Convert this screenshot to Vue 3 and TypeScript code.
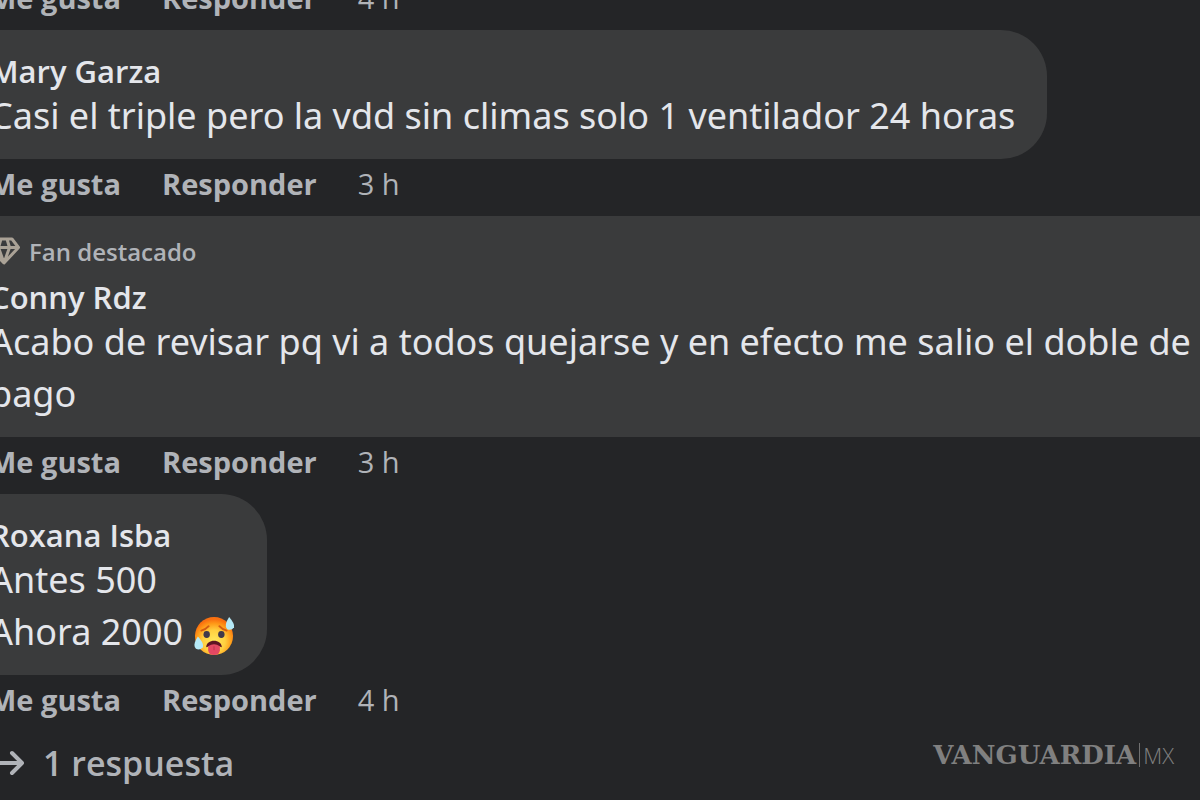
<script setup lang="ts">
interface Comment {
  author: string
  lines: string[]
  age: string
  badge?: string
  hot?: boolean
  wide?: boolean
}

const comments: Comment[] = [
  {
    author: 'Mary Garza',
    lines: ['Casi el triple pero la vdd sin climas solo 1 ventilador 24 horas'],
    age: '3 h',
  },
  {
    author: 'Conny Rdz',
    lines: ['Acabo de revisar pq vi a todos quejarse y en efecto me salio el doble de', 'pago'],
    age: '3 h',
    badge: 'Fan destacado',
    wide: true,
  },
  {
    author: 'Roxana Isba',
    lines: ['Antes 500', 'Ahora 2000'],
    age: '4 h',
    hot: true,
  },
]
</script>

<template>
  <main class="thread">
    <div class="actions">
      <button type="button">Me gusta</button>
      <button type="button">Responder</button>
      <a href="#" class="age">4 h</a>
    </div>

    <article v-for="c in comments" :key="c.author">
      <div class="bubble" :class="{ wide: c.wide }">
        <div v-if="c.badge" class="badge">
          <svg class="gem" viewBox="0 0 32 28" aria-hidden="true">
            <path d="M8 2H24L30.500 10.500L16 26L1.500 10.500ZM1.500 10.500H30.500M16 26L10.500 10.500L13 2M16 26L21.500 10.500L19 2" />
          </svg>
          <span>{{ c.badge }}</span>
        </div>
        <a href="#" class="author">{{ c.author }}</a>
        <p>
          <span v-for="(line, i) in c.lines" :key="i" class="line">
            {{ line }}
            <svg v-if="c.hot && i === c.lines.length - 1" class="emoji" viewBox="0 0 42 42" role="img" aria-label="Cara acalorada">
              <defs>
                <radialGradient id="heat" cx="50%" cy="64%" r="58%">
                  <stop offset="0" stop-color="#ffe95c" />
                  <stop offset="0.5" stop-color="#ffd040" />
                  <stop offset="0.8" stop-color="#ff9a18" />
                  <stop offset="1" stop-color="#f97010" />
                </radialGradient>
              </defs>
              <circle cx="20.500" cy="21.500" r="19.500" fill="url(#heat)" />
              <path d="M7.500 16Q12 15 15 11.500M26 11.500Q29 15 33.500 16" fill="none" stroke="#d35b13" stroke-width="2" stroke-linecap="round" />
              <ellipse cx="13" cy="20" rx="3.300" ry="3.500" fill="#40394b" />
              <ellipse cx="28" cy="20" rx="3.300" ry="3.500" fill="#40394b" />
              <path d="M12.500 33C12.500 24 28.500 24 28.500 33Q20.500 30 12.500 33Z" fill="#5e1423" />
              <path d="M14.500 32Q20.500 28 26.500 32V36Q26 41 20.500 41T14.500 36Z" fill="#e34863" />
              <path d="M20.500 32V36" stroke="#bd304f" stroke-width="1" />
              <path d="M36 2Q42 9 41 12.500Q38.500 16.500 34 14.500Q30 11 36 2Z" fill="#b5e9f7" />
              <path d="M4 22Q10.500 29 9 33Q6 36.500 2 34.500Q-2 31 4 22Z" fill="#b5e9f7" />
            </svg>
          </span>
        </p>
      </div>
      <div class="actions">
        <button type="button">Me gusta</button>
        <button type="button">Responder</button>
        <a href="#" class="age">{{ c.age }}</a>
      </div>
    </article>

    <button type="button" class="replies">
      <svg class="arrow" viewBox="0 0 34 28" aria-hidden="true">
        <path d="M2 14H31M21 4L31 14L21 24" />
      </svg>
      <span>1 respuesta</span>
    </button>

    <div class="watermark">
      <span class="brand">VANGUARDIA</span>
      <span class="country">MX</span>
    </div>
  </main>
</template>

<style>
body {
  margin: 0;
  background: #242527;
}
</style>

<style scoped>
.thread {
  position: relative;
  box-sizing: border-box;
  height: 100vh;
  overflow: hidden;
  color: #e4e6eb;
  font-family: "Open Sans", "Noto Sans", sans-serif;
  display: flex;
  flex-direction: column;
}

.thread > .actions {
  margin-top: -27px;
}

button {
  border: 0;
  padding: 0;
  background: none;
  color: #b0b3b8;
  font: inherit;
  cursor: pointer;
}

a {
  color: inherit;
  text-decoration: none;
}

.actions {
  display: flex;
  flex-shrink: 0;
  align-items: flex-start;
  gap: 41px;
  height: 57px;
  margin-left: -11px;
  line-height: 50px;
  font-size: 29px;
  color: #b0b3b8;
}

.actions button {
  font-weight: 700;
}

.bubble {
  box-sizing: border-box;
  width: fit-content;
  margin-left: -44px;
  padding: 22px 32px 17px 34px;
  border-radius: 46px;
  background: #3a3b3c;
}

.bubble.wide {
  width: auto;
  margin-right: -60px;
}

.badge {
  display: flex;
  align-items: center;
  gap: 9px;
  height: 26px;
  margin: 0 0 14px -2px;
  font-size: 24px;
  font-weight: 600;
  color: #b0b3b8;
}

.gem {
  width: 32px;
  height: 28px;
  fill: none;
  stroke: #aaa296;
  stroke-width: 3;
  stroke-linejoin: round;
}

.author {
  display: block;
  line-height: 38px;
  font-size: 31px;
  font-weight: 600;
}

p {
  margin: 0;
  font-family: "Noto Sans", "Open Sans", sans-serif;
  font-size: 36px;
  line-height: 52px;
  white-space: nowrap;
}

.line {
  display: block;
  height: 52px;
}

.emoji {
  width: 41px;
  height: 41px;
  margin-left: 2px;
  vertical-align: middle;
}

.replies {
  display: flex;
  align-items: center;
  align-self: flex-start;
  gap: 18px;
  margin-left: -9px;
  line-height: 62px;
  font-size: 34px;
  font-weight: 600;
}

.arrow {
  width: 34px;
  height: 28px;
  fill: none;
  stroke: #b0b3b8;
  stroke-width: 4;
  stroke-linecap: round;
  stroke-linejoin: round;
}

.watermark {
  position: absolute;
  right: 26px;
  bottom: 32px;
  display: flex;
  align-items: center;
  gap: 3px;
  line-height: 26px;
  color: #808080;
}

.brand {
  font-family: "DejaVu Serif", serif;
  font-size: 26px;
  font-weight: 700;
}

.country {
  padding-left: 3px;
  border-left: 1px solid #707070;
  font-family: "Open Sans", sans-serif;
  font-size: 22px;
  line-height: 24px;
  font-weight: 300;
}
</style>
